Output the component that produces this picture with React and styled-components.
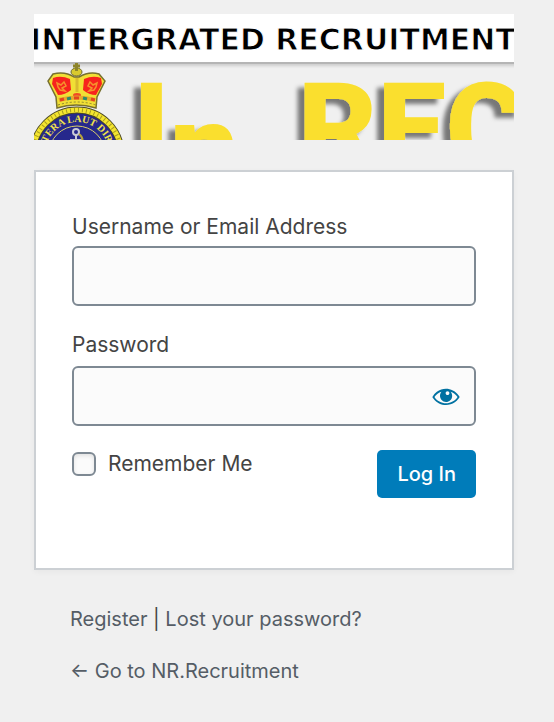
import React, { useState } from 'react';
import styled, { createGlobalStyle } from 'styled-components';

const GlobalStyle = createGlobalStyle`
  *, *::before, *::after {
    box-sizing: border-box;
  }
  body {
    margin: 0;
    background: #f0f0f0;
    color: #444;
    font-family: Inter, 'Liberation Sans', sans-serif;
    font-size: 20px;
    line-height: 28px;
  }
`;

const Page = styled.main`
  display: flex;
  flex-direction: column;
  width: 100%;
  max-width: 640px;
  margin: 0 auto;
  padding: 14px 40px 36px 34px;
`;

const LogoLink = styled.a`
  display: block;
  margin-bottom: 30px;
  overflow: hidden;
  svg {
    display: block;
    width: 100%;
    height: auto;
  }
`;

const LoginForm = styled.form`
  display: flex;
  flex-direction: column;
  min-height: 400px;
  padding: 40px 36px;
  font-size: 21px;
  background: #fff;
  border: 2px solid #ccd0d4;
  box-shadow: 0 2px 6px rgba(0, 0, 0, 0.04);
`;

const Field = styled.div`
  display: flex;
  flex-direction: column;
  gap: ${props => props.$gap};
  margin-bottom: 24px;
`;

const Label = styled.label`
  line-height: 30px;
`;

const InputWrap = styled.div`
  position: relative;
`;

const TextInput = styled.input`
  display: block;
  width: 100%;
  height: 60px;
  padding: 0 12px;
  font: inherit;
  color: #32373c;
  background: #fbfbfb;
  border: 2px solid #7e8993;
  border-radius: 6px;
  &:focus {
    outline: none;
    border-color: #007cba;
  }
`;

// Sits on top of the right end of the password box
const EyeButton = styled.button`
  position: absolute;
  top: 0;
  right: 0;
  display: flex;
  align-items: center;
  justify-content: center;
  width: 60px;
  height: 60px;
  padding: 0;
  color: #0071a1;
  background: none;
  border: 0;
  cursor: pointer;
`;

const Actions = styled.div`
  display: flex;
  justify-content: space-between;
  align-items: flex-start;
`;

const Remember = styled.label`
  display: flex;
  align-items: center;
  gap: 12px;
`;

const Checkbox = styled.input`
  appearance: none;
  width: 24px;
  height: 24px;
  margin: 0;
  background: #fbfbfb;
  border: 2px solid #7e8993;
  border-radius: 6px;
  box-shadow: inset 0 2px 4px rgba(0, 0, 0, 0.1);
  &:checked {
    background: #007cba;
  }
`;

const SubmitButton = styled.button`
  height: 48px;
  padding: 0 20px;
  font: inherit;
  font-size: 20px;
  font-weight: 500;
  color: #fff;
  background: #007cba;
  border: 0;
  border-radius: 5px;
  cursor: pointer;
`;

const Links = styled.nav`
  padding: 36px 36px 0;
  line-height: 26px;
  & + & {
    padding-top: 26px;
  }
`;

const NavLink = styled.a`
  color: #555d66;
  text-decoration: none;
`;

function Crest() {
  return (
    <g>
      <circle cx="77" cy="154" r="44" fill="#26288c" stroke="#4b4826" strokeWidth="7" />
      <circle cx="77" cy="154" r="44" fill="none" stroke="#f4e52f" strokeWidth="5" />
      <circle cx="77" cy="154" r="44" fill="none" stroke="#a89c22" strokeWidth="4" strokeDasharray="1 3" />
      <circle cx="77" cy="154" r="28" fill="none" stroke="#d9cf6a" strokeWidth="1" />
      <path id="motto" d="M45 154a32 32 0 0 1 64 0" fill="none" />
      <text fontFamily="Liberation Serif" fontSize="10" fontWeight="700" fill="#efe24a">
        <textPath href="#motto" startOffset="50%" textAnchor="middle">TERA LAUT DIR</textPath>
      </text>
      <circle cx="76" cy="132" r="3" fill="none" stroke="#c9cbd6" strokeWidth="2" />
      <path d="M76 135v9M70 140h12" stroke="#c9cbd6" strokeWidth="2" />
      <path d="M79 134q5 4 3 9" stroke="#b7a23a" strokeWidth="2" fill="none" />
      <path d="M57 108l-1-11-8-16 5-7q12-3 21 3h5q10-6 20-3l6 7-8 16-1 11q-20-6-39 0z" fill="#f1df35" stroke="#77702f" strokeWidth="1.5" />
      <path d="M53 78q8-3 17 1l1 11q-6 5-13 5l-6-11z" fill="#f7231d" />
      <path d="M101 78q-8-3-17 1l-1 11q6 5 13 5l6-11z" fill="#f7231d" />
      <path d="M57 83l4 2 3-3 2 4-4 2 3 3-5-1-2-3zM97 83l-4 2-3-3-2 4 4 2-3 3 5-1 2-3z" fill="none" stroke="#f5922b" strokeWidth="1.5" />
      <path d="M77 78v14" stroke="#d9bb2e" strokeWidth="3" />
      <ellipse cx="77" cy="95" rx="4" ry="2" fill="#f04b24" />
      <path d="M59 100q18-5 36 0" stroke="#e7a92c" strokeWidth="4" fill="none" />
      <path d="M60 100l4-1M74 98h5M91 99l4 1" stroke="#e2451f" strokeWidth="3" />
      <path d="M67 99l4-1M83 98l4 1" stroke="#2c8c6a" strokeWidth="3" />
      <path d="M58 105q19-6 38 0" stroke="#8d852c" strokeWidth="1" strokeDasharray="2 2" fill="none" />
      <ellipse cx="76.5" cy="72" rx="5.5" ry="4" fill="#d8c92e" stroke="#6b672c" />
      <path d="M76.5 63v8M73 66h7" stroke="#8d842a" strokeWidth="3" />
    </g>
  );
}

function Logo() {
  return (
    <svg viewBox="34 14 480 126" role="img" aria-label="Intergrated Recruitment In REC">
      <defs>
        <filter id="lineShadow" x="-5%" y="-20%" width="110%" height="150%">
          <feDropShadow dx="0" dy="2" stdDeviation="1.5" floodColor="#000" floodOpacity="0.15" />
        </filter>
        <filter id="letterShadow" x="-10%" y="-10%" width="120%" height="120%">
          <feDropShadow dx="-7" dy="5" stdDeviation="2" floodColor="#000" floodOpacity="0.5" />
        </filter>
      </defs>
      <rect x="24" y="4" width="500" height="60" fill="#b5b5b5" filter="url(#lineShadow)" />
      <rect x="34" y="14" width="480" height="48" fill="#fff" />
      {/* the white stroke thins the bold face a little */}
      <text x="30" y="50" fontFamily="DejaVu Sans" fontSize="30" fontWeight="700" fill="#000" stroke="#fff" strokeWidth="1">
        INTERGRATED RECRUITMENT
      </text>
      <g filter="url(#letterShadow)" fontFamily="Roboto" fontSize="122" fontWeight="900" fill="#fadf2f">
        <text x="133" y="170">I<tspan dy="20">n</tspan></text>
        <text x="298" y="170">REC</text>
      </g>
      <Crest />
    </svg>
  );
}

function EyeIcon() {
  return (
    <svg width="30" height="30" viewBox="0 0 20 20" fill="currentColor" aria-hidden="true">
      <path d="M18.3 9.5C15 4.9 8.5 3.8 3.9 7.2c-1.2.9-2.2 2.1-3 3.4.2.4.5.8.8 1.2 3.3 4.6 9.6 5.6 14.2 2.4.9-.7 1.7-1.4 2.4-2.4.3-.4.5-.8.8-1.2-.3-.4-.5-.8-.8-1.1zm-8.2-2.3c.5-.5 1.3-.5 1.8 0s.5 1.3 0 1.8-1.3.5-1.8 0-.5-1.3 0-1.8zm-.1 7.700c-3.100 0-6-1.600-7.700-4.200C3.500 9 5.100 7.800 7 7.200c-.7.8-1 1.700-1 2.700 0 2.200 1.700 4.100 4 4.100 2.200 0 4.100-1.700 4.100-4v-.1c0-1-.4-2-1.100-2.700 1.900.6 3.500 1.800 4.700 3.500-1.700 2.600-4.600 4.200-7.700 4.200z" />
    </svg>
  );
}

function App() {
  const [visible, setVisible] = useState(false);
  return (
    <>
      <GlobalStyle />
      <Page>
        <LogoLink href="#home"><Logo /></LogoLink>
        <LoginForm onSubmit={e => e.preventDefault()}>
          <Field $gap="4px">
            <Label htmlFor="user">Username or Email Address</Label>
            <TextInput id="user" type="text" />
          </Field>
          <Field $gap="6px">
            <Label htmlFor="pass">Password</Label>
            <InputWrap>
              <TextInput id="pass" type={visible ? 'text' : 'password'} />
              <EyeButton type="button" aria-label="Show password" onClick={() => setVisible(!visible)}>
                <EyeIcon />
              </EyeButton>
            </InputWrap>
          </Field>
          <Actions>
            <Remember><Checkbox type="checkbox" />Remember Me</Remember>
            <SubmitButton type="submit">Log In</SubmitButton>
          </Actions>
        </LoginForm>
        <Links>
          <NavLink href="#register">Register</NavLink> | <NavLink href="#lost">Lost your password?</NavLink>
        </Links>
        <Links>
          <NavLink href="#back">← Go to NR.Recruitment</NavLink>
        </Links>
      </Page>
    </>
  );
}

export default App;
